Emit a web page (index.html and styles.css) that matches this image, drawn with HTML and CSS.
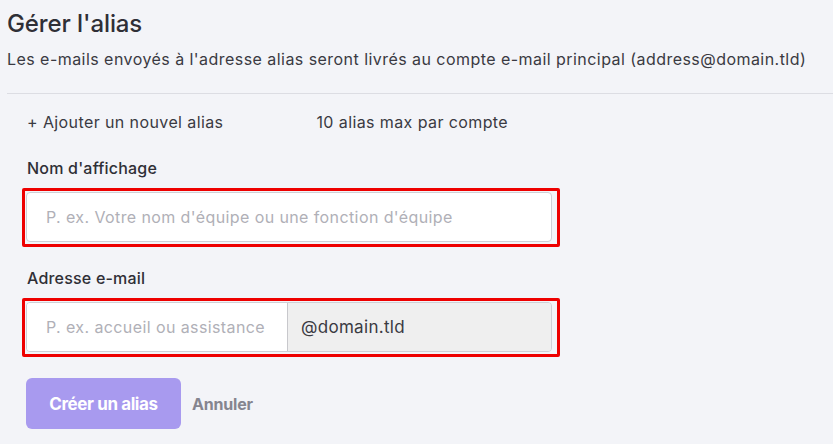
FILE: index.html
```html
<!DOCTYPE html>
<html lang="fr">
<head>
  <meta charset="UTF-8">
  <title>Gérer l'alias</title>
  <link rel="stylesheet" href="styles.css">
</head>
<body>

  <h1>Gérer l'alias</h1>
  <p class="intro">Les e-mails envoyés à l'adresse alias seront livrés au compte e-mail principal (address@domain.tld)</p>

  <div class="panel">
    <div class="panel-head">
      <span class="add-link">+ Ajouter un nouvel alias</span>
      <span class="limit">10 alias max par compte</span>
    </div>

    <label class="field-label" for="display-name">Nom d'affichage</label>
    <div class="highlight">
      <input class="text-input" id="display-name" type="text" placeholder="P. ex. Votre nom d'équipe ou une fonction d'équipe">
    </div>

    <label class="field-label" for="alias">Adresse e-mail</label>
    <div class="highlight">
      <div class="input-group">
        <input class="group-input" id="alias" type="text" placeholder="P. ex. accueil ou assistance">
        <span class="group-addon">@domain.tld</span>
      </div>
    </div>

    <div class="actions">
      <button class="btn-create" disabled>Créer un alias</button>
      <button class="btn-cancel">Annuler</button>
    </div>
  </div>

</body>
</html>
```

FILE: styles.css
```css
body {
  margin: 0;
  padding: 0 0 0 7px;
  font-family: Inter, "DejaVu Sans", sans-serif;
  background-color: #f3f4f8;
  color: #2f2f36;
}
h1 {
  margin: 0;
  padding-top: 10px;
  font-size: 24px;
  font-weight: 500;
  line-height: 28px;
  letter-spacing: -0.1px;
}
.intro {
  margin: 11px 0 0;
  font-size: 16px;
  line-height: 20px;
  letter-spacing: 0.45px;
  color: #3a3a42;
}
.panel {
  margin-top: 24px;
  border-top: 1px solid #dcdde3;
  padding-left: 15px;
}
.panel-head {
  display: flex;
  padding: 18px 0 5px 5px;
  font-size: 16px;
  line-height: 20px;
  letter-spacing: 0.4px;
  color: #3a3a42;
}
.limit {
  margin-left: 93px;
}
.field-label {
  display: block;
  margin: 21px 0 10px 5px;
  font-size: 16px;
  font-weight: 500;
  line-height: 20px;
  letter-spacing: 0.2px;
  color: #2f2f36;
}
.highlight {
  width: 526px;
  border: 3px solid #ee0000;
  border-radius: 2px;
  padding: 1px 5px 2px 1px;
}
.text-input,
.group-input {
  box-sizing: border-box;
  width: 100%;
  height: 50px;
  padding: 0 19px;
  border: 1px solid #cfd0d6;
  border-radius: 4px;
  background: white;
  font-family: inherit;
  font-size: 16px;
  letter-spacing: 0.4px;
  color: #2f2f36;
}
.text-input::placeholder,
.group-input::placeholder {
  color: #b0b0b7;
}
.input-group {
  display: flex;
  height: 50px;
  box-sizing: border-box;
  border: 1px solid #cfd0d6;
  border-radius: 4px;
  overflow: hidden;
}
.group-input {
  flex: none;
  width: 261px;
  height: 48px;
  border: none;
  border-radius: 0;
  border-right: 1px solid #c8c8cc;
}
.group-addon {
  flex: 1;
  display: flex;
  align-items: center;
  padding-left: 13px;
  background: #efefef;
  font-size: 17px;
  letter-spacing: 0.3px;
  color: #3a3a42;
}
.actions {
  display: flex;
  align-items: center;
  gap: 11px;
  margin-top: 21px;
  padding-left: 4px;
}
button {
  border: none;
  font-family: inherit;
  font-size: 17px;
  font-weight: 700;
  cursor: pointer;
  letter-spacing: -0.4px;
}
.btn-create {
  width: 155px;
  height: 51px;
  border-radius: 6px;
  background-color: #a89aef;
  color: white;
}
.btn-cancel {
  padding: 0;
  background: none;
  font-size: 16px;
  letter-spacing: -0.2px;
  color: #85858f;
}
```
